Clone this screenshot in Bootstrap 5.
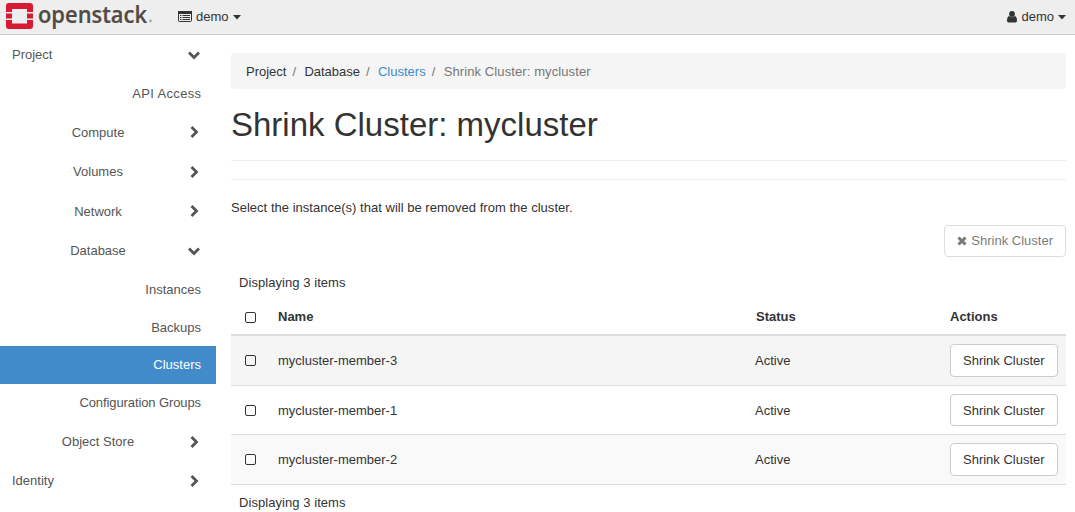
<!DOCTYPE html>
<html lang="en">
<head>
<meta charset="utf-8">
<meta name="viewport" content="width=device-width, initial-scale=1">
<title>Shrink Cluster: mycluster</title>
<link href="https://cdn.jsdelivr.net/npm/bootstrap@5.3.0/dist/css/bootstrap.min.css" rel="stylesheet">
<style>
body{font:13px/18px "Liberation Sans",Arial,sans-serif;color:#333;background:#fff;height:512px;overflow:hidden}
svg{display:block;flex:none}
a{text-decoration:none;color:inherit}
.topbar{height:35px;background:#eee;border-bottom:1px solid #ccc;padding:0 9px 0 5px}
.tenant{margin-left:23px}
.side{width:216px;color:#555}
.side a{display:flex;align-items:center;height:38px;padding:0 15px 0 12px}
.side .top-item{height:39px;justify-content:space-between}
.side .group{height:39.5px;padding:1px 15px 0 9px}
.side .group.nudge{padding-top:2px}
.side .group.nudge svg{margin-top:-1px}
.side .group span{flex:1;text-align:center}
.side .leaf{justify-content:flex-end}
.side .lower{padding-top:2px}
.side .api{letter-spacing:.35px;padding-right:14.6px}
.side .narrow{letter-spacing:-.1px}
.side .selected{background:#428bca;color:#fff}
.side .chev{width:14px;height:14px}
.page{margin:18px 9px 0 15px;min-width:0}
.crumbs{--bs-breadcrumb-divider-color:#777;--bs-breadcrumb-item-active-color:#777;--bs-breadcrumb-item-padding-x:6px;height:36px;background:#f5f5f5;border-radius:4px;padding:10px 15px 8px;margin:0}
.crumbs .breadcrumb-item+.breadcrumb-item::before{padding-right:8.300px}
.crumbs a{color:#428bca}
.crumbs .active{letter-spacing:.1px}
h1{font-size:33px;line-height:38px;font-weight:400;margin:17px 0 16px}
.rule{height:1px;background:#eee}
.rule+.rule{margin-top:18px}
.intro{margin:19px 0 8px;letter-spacing:.02px}
.btn-os{display:block;font-size:13px;line-height:18px;padding:0 12px;height:33px;color:#333;background:#fff;border:1px solid #ccc;border-radius:4px}
.btn-os:disabled{color:#333;background:#fff;border-color:#ccc;opacity:.65;height:32px}
.actions{margin-bottom:17px}
.grid{margin:0 0 9px;table-layout:fixed;color:#333;border-collapse:separate;border-spacing:0}
.grid>:not(caption)>*>*{padding:0 0 0 8px;vertical-align:middle;box-shadow:none;border:0 solid #ddd;border-bottom-width:1px;background:transparent}
.grid>thead>tr>th{height:44px;padding-top:7px;border-bottom-width:2px}
.grid>thead>tr>th.status{padding-left:9px}
.grid tbody tr{height:50px}
.grid tbody tr:nth-child(1){background:#f5f5f5}
.grid tbody tr:nth-child(2){height:49px}
.grid>tbody>tr:nth-child(2)>td:not(:last-child){padding-top:1px}
.grid tbody tr:nth-child(2) .btn-os{height:32px;padding-top:1px}
.grid tbody tr:nth-child(3){background:#f9f9f9}
.grid .box{width:11px;height:11px;border:1px solid #333;border-radius:2px;margin:1px 0 0 6px}
.grid tbody .box{margin-top:0}
.count{padding-left:8px;letter-spacing:.06px}
</style>
</head>
<body>
<header class="topbar d-flex align-items-center">
  <svg class="overflow-visible" width="150" height="34" viewBox="5 0 150 34">
    <path fill="#da1a32" d="M8.500 3h21.500q3 0 3 3v6h-6V9H12v3H6V6q0-3 2.500-3zM6 13.500h6v5H6zM27 13.500h6v5h-6zM6 20h6v3.500h15V20h6v6q0 3-3 3H8.500Q6 29 6 26z"/>
    <text x="38" y="22.600" font-family="Open Sans" font-weight="600" font-size="22.500" fill="#514a45" stroke="#514a45" stroke-width=".2" textLength="109" lengthAdjust="spacingAndGlyphs">openstack</text>
    <circle cx="150.500" cy="21" r="1.400" fill="#aaa"/>
  </svg>
  <a href="#" class="tenant d-flex align-items-center">
    <svg width="14" height="12" viewBox="0 0 14 12"><rect x=".5" y=".5" width="13" height="10" rx="1" fill="none" stroke="#333"/><path d="M0 0h14v3H0zM2 4h1.500v1H2zM4.500 4H12v1H4.500zM2 6h1.500v1H2zM4.500 6H12v1H4.500zM2 8h1.500v1H2zM4.500 8H12v1H4.500z" fill="#333"/></svg>
    <span class="ms-1">demo</span>
    <svg class="ms-1" width="8" height="5" viewBox="0 0 8 5"><path d="M0 0h8L4 4.500z" fill="#333"/></svg>
  </a>
  <a href="#" class="ms-auto d-flex align-items-center">
    <svg width="10" height="12" viewBox="0 0 10 12"><circle cx="5" cy="3" r="2.900" fill="#333"/><path d="M2.200 5Q5 7.500 7.800 5 10 5.500 10 9.500 10 11.500 8.500 11.500h-7Q0 11.500 0 9.500 0 5.500 2.200 5z" fill="#333"/></svg>
    <span class="ms-1">demo</span>
    <svg class="ms-1" width="8" height="5" viewBox="0 0 8 5"><path d="M0 0h8L4 4.500z" fill="#333"/></svg>
  </a>
</header>
<svg width="0" height="0" class="position-absolute"><defs>
  <symbol id="down" viewBox="0 0 14 14"><path d="M2 4.500l5 5 5-5" fill="none" stroke="#555" stroke-width="2.800"/></symbol>
  <symbol id="right" viewBox="0 0 14 14"><path d="M4.500 2l5 5-5 5" fill="none" stroke="#555" stroke-width="2.800"/></symbol>
</defs></svg>
<div class="d-flex">
  <nav class="side flex-shrink-0">
    <a href="#" class="top-item"><span>Project</span><svg class="chev"><use href="#down"/></svg></a>
    <a href="#" class="leaf lower api">API Access</a>
    <a href="#" class="group nudge"><span>Compute</span><svg class="chev"><use href="#right"/></svg></a>
    <a href="#" class="group"><span>Volumes</span><svg class="chev"><use href="#right"/></svg></a>
    <a href="#" class="group nudge"><span>Network</span><svg class="chev"><use href="#right"/></svg></a>
    <a href="#" class="group"><span>Database</span><svg class="chev"><use href="#down"/></svg></a>
    <a href="#" class="leaf lower">Instances</a>
    <a href="#" class="leaf lower">Backups</a>
    <a href="#" class="leaf selected">Clusters</a>
    <a href="#" class="leaf narrow">Configuration Groups</a>
    <a href="#" class="group"><span>Object Store</span><svg class="chev"><use href="#right"/></svg></a>
    <a href="#" class="top-item"><span>Identity</span><svg class="chev"><use href="#right"/></svg></a>
  </nav>
  <main class="page flex-grow-1">
    <ol class="breadcrumb crumbs">
      <li class="breadcrumb-item">Project</li><li class="breadcrumb-item">Database</li><li class="breadcrumb-item"><a href="#">Clusters</a></li><li class="breadcrumb-item active">Shrink Cluster: mycluster</li>
    </ol>
    <h1>Shrink Cluster: mycluster</h1>
    <div class="rule"></div>
    <div class="rule"></div>
    <p class="intro">Select the instance(s) that will be removed from the cluster.</p>
    <div class="actions d-flex justify-content-end"><button class="btn btn-os d-flex align-items-center" disabled><svg class="me-1" width="10" height="10" viewBox="0 0 10 10"><path d="M1.500 1.500l7 7M8.500 1.500l-7 7" stroke="#333" stroke-width="3"/></svg>Shrink Cluster</button></div>
    <div class="count">Displaying 3 items</div>
    <table class="table grid">
      <colgroup><col style="width:39px"><col><col style="width:195px"><col style="width:124px"></colgroup>
      <thead><tr><th><div class="box"></div></th><th>Name</th><th class="status">Status</th><th>Actions</th></tr></thead>
      <tbody>
        <tr><td><div class="box"></div></td><td>mycluster-member-3</td><td>Active</td><td><button class="btn btn-os">Shrink Cluster</button></td></tr>
        <tr><td><div class="box"></div></td><td>mycluster-member-1</td><td>Active</td><td><button class="btn btn-os">Shrink Cluster</button></td></tr>
        <tr><td><div class="box"></div></td><td>mycluster-member-2</td><td>Active</td><td><button class="btn btn-os">Shrink Cluster</button></td></tr>
      </tbody>
    </table>
    <div class="count">Displaying 3 items</div>
  </main>
</div>
<script src="https://cdn.jsdelivr.net/npm/bootstrap@5.3.0/dist/js/bootstrap.bundle.min.js"></script>
</body>
</html>
